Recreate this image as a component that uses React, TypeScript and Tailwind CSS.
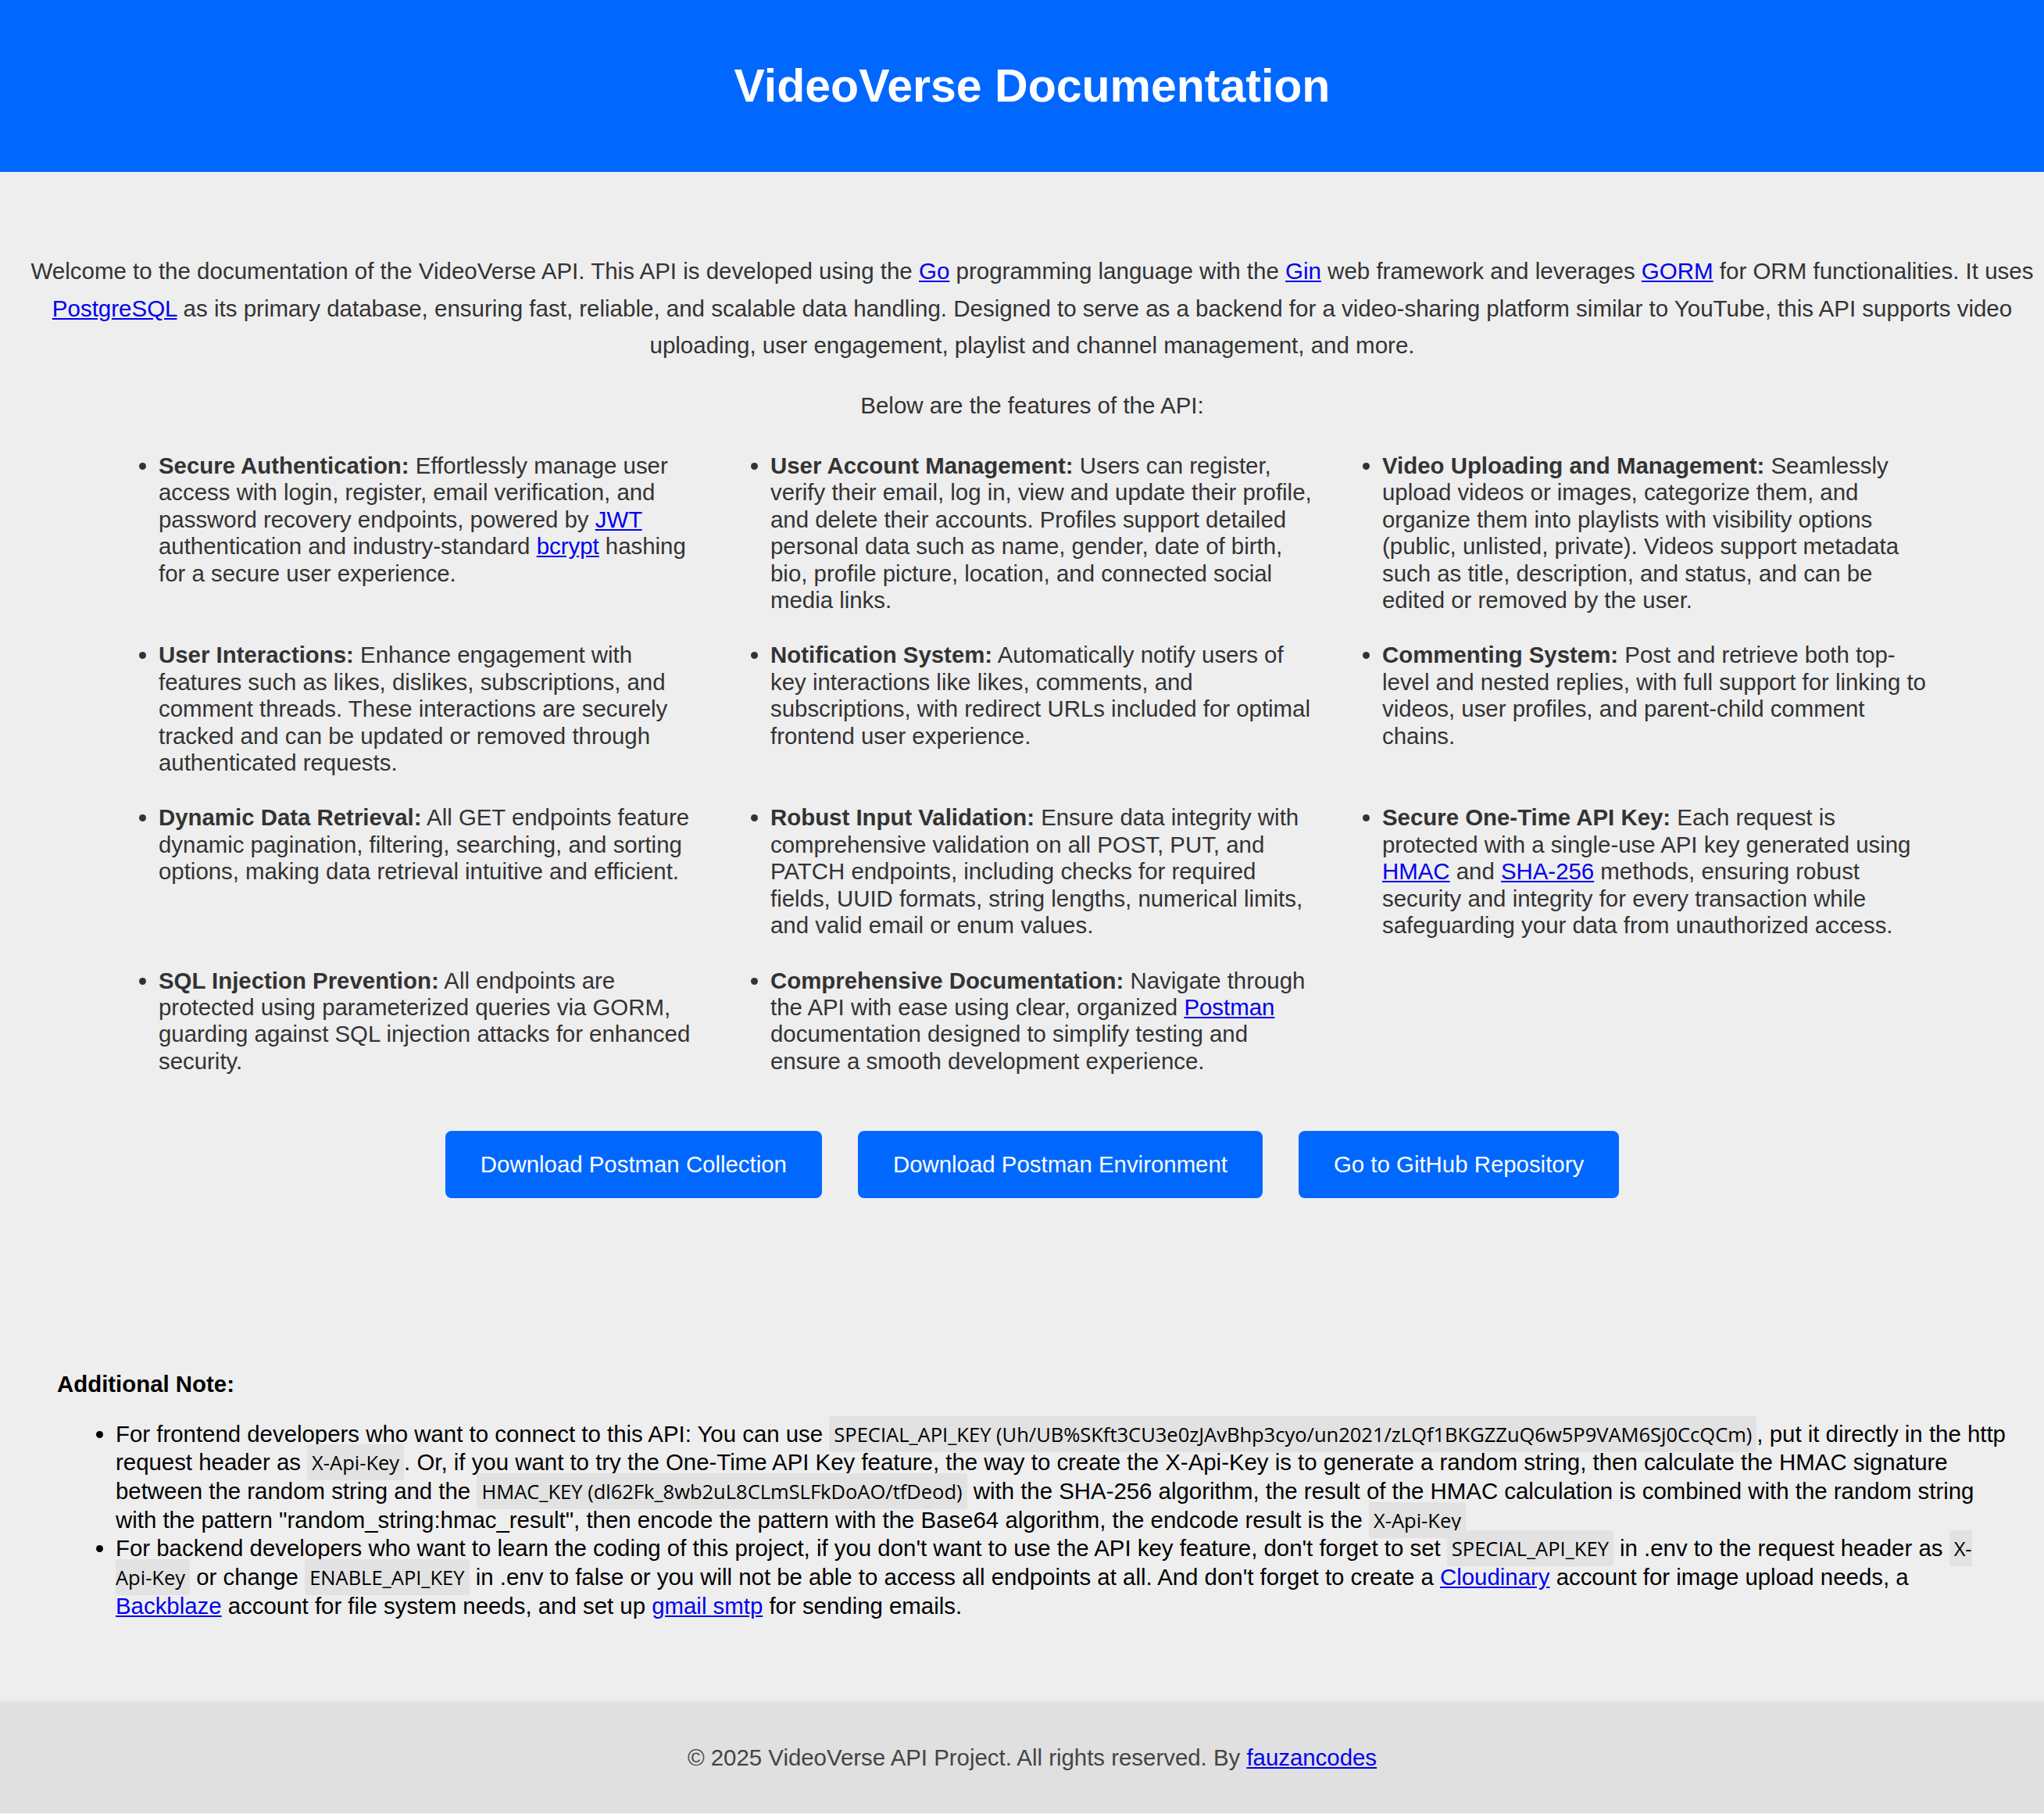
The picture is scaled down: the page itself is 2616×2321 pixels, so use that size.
import type { ReactNode } from 'react';

function A({ children }: { children: ReactNode }) {
  return (
    <a href="#" className="text-[#0000ee] underline">
      {children}
    </a>
  );
}

function Code({ children }: { children: ReactNode }) {
  return (
    <code className="rounded-[4px] bg-[#e2e2e2] px-[6px] py-[6px] font-['Open_Sans',sans-serif] text-[25.5px] leading-none">
      {children}
    </code>
  );
}

function Feature({ title, children }: { title: string; children: ReactNode }) {
  return (
    <li>
      <strong className="font-bold">{title}</strong> {children}
    </li>
  );
}

export default function App() {
  return (
    <div className="w-full overflow-hidden bg-[#eeeeee] font-['Liberation_Sans',Arial,sans-serif] text-[#333333]">
      <div className="w-[2642px]">
        <header className="flex h-[220px] items-center justify-center bg-[#0068ff]">
          <h1 className="text-[59px] font-bold leading-none text-white">VideoVerse Documentation</h1>
        </header>

        <section className="px-[33px] pt-[103px] text-center text-[29.5px] leading-[47.5px]">
          <p>
            Welcome to the documentation of the VideoVerse API. This API is developed using the <A>Go</A> programming
            language with the <A>Gin</A> web framework and leverages <A>GORM</A> for ORM functionalities. It uses{' '}
            <A>PostgreSQL</A> as its primary database, ensuring fast, reliable, and scalable data handling. Designed to
            serve as a backend for a video-sharing platform similar to YouTube, this API supports video uploading, user
            engagement, playlist and channel management, and more.
          </p>
          <p className="mt-[29px]">Below are the features of the API:</p>
        </section>

        <ul className="mt-[37px] ml-[203px] grid list-disc grid-cols-[701px_701px_701px] gap-x-[82px] gap-y-[36px] text-[29.4px] leading-[34.4px]">
          <Feature title="Secure Authentication:">
            Effortlessly manage user access with login, register, email verification, and password recovery endpoints,
            powered by <A>JWT</A> authentication and industry-standard <A>bcrypt</A> hashing for a secure user
            experience.
          </Feature>
          <Feature title="User Account Management:">
            Users can register, verify their email, log in, view and update their profile, and delete their accounts.
            Profiles support detailed personal data such as name, gender, date of birth, bio, profile picture, location,
            and connected social media links.
          </Feature>
          <Feature title="Video Uploading and Management:">
            Seamlessly upload videos or images, categorize them, and organize them into playlists with visibility
            options (public, unlisted, private). Videos support metadata such as title, description, and status, and can
            be edited or removed by the user.
          </Feature>
          <Feature title="User Interactions:">
            Enhance engagement with features such as likes, dislikes, subscriptions, and comment threads. These
            interactions are securely tracked and can be updated or removed through authenticated requests.
          </Feature>
          <Feature title="Notification System:">
            Automatically notify users of key interactions like likes, comments, and subscriptions, with redirect URLs
            included for optimal frontend user experience.
          </Feature>
          <Feature title="Commenting System:">
            Post and retrieve both top-level and nested replies, with full support for linking to videos, user profiles,
            and parent-child comment chains.
          </Feature>
          <Feature title="Dynamic Data Retrieval:">
            All GET endpoints feature dynamic pagination, filtering, searching, and sorting options, making data
            retrieval intuitive and efficient.
          </Feature>
          <Feature title="Robust Input Validation:">
            Ensure data integrity with comprehensive validation on all POST, PUT, and PATCH endpoints, including checks
            for required fields, UUID formats, string lengths, numerical limits, and valid email or enum values.
          </Feature>
          <Feature title="Secure One-Time API Key:">
            Each request is protected with a single-use API key generated using <A>HMAC</A> and <A>SHA-256</A> methods,
            ensuring robust security and integrity for every transaction while safeguarding your data from unauthorized
            access.
          </Feature>
          <Feature title="SQL Injection Prevention:">
            All endpoints are protected using parameterized queries via GORM, guarding against SQL injection attacks for
            enhanced security.
          </Feature>
          <Feature title="Comprehensive Documentation:">
            Navigate through the API with ease using clear, organized <A>Postman</A> documentation designed to simplify
            testing and ensure a smooth development experience.
          </Feature>
        </ul>

        <div className="mt-[72px] flex justify-center gap-[46px]">
          {['Download Postman Collection', 'Download Postman Environment', 'Go to GitHub Repository'].map((label) => (
            <a
              key={label}
              href="#"
              className="flex h-[86px] items-center rounded-[8px] bg-[#0068ff] px-[45px] text-[29.4px] text-white"
            >
              {label}
            </a>
          ))}
        </div>

        <section className="mt-[221px] px-[73px] text-black">
          <h3 className="text-[29.4px] font-bold leading-[34.4px]">Additional Note:</h3>
          <ul className="mt-[28px] list-disc pl-[75px] text-[29.4px] leading-[36.67px]">
            <li>
              For frontend developers who want to connect to this API: You can use{' '}
              <Code>SPECIAL_API_KEY (Uh/UB%SKft3CU3e0zJAvBhp3cyo/un2021/zLQf1BKGZZuQ6w5P9VAM6Sj0CcQCm)</Code>, put it
              directly in the http request header as <Code>X-Api-Key</Code>. Or, if you want to try the One-Time API Key
              feature, the way to create the X-Api-Key is to generate a random string, then calculate the HMAC signature
              between the random string and the <Code>HMAC_KEY (dl62Fk_8wb2uL8CLmSLFkDoAO/tfDeod)</Code> with the
              SHA-256 algorithm, the result of the HMAC calculation is combined with the random string with the pattern
              "random_string:hmac_result", then encode the pattern with the Base64 algorithm, the endcode result is the{' '}
              <Code>X-Api-Key</Code>
            </li>
            <li>
              For backend developers who want to learn the coding of this project, if you don't want to use the API key
              feature, don't forget to set <Code>SPECIAL_API_KEY</Code> in .env to the request header as{' '}
              <Code>X-Api-Key</Code> or change <Code>ENABLE_API_KEY</Code> in .env to false or you will not be able to
              access all endpoints at all. And don't forget to create a <A>Cloudinary</A> account for image upload
              needs, a <A>Backblaze</A> account for file system needs, and set up <A>gmail smtp</A> for sending emails.
            </li>
          </ul>
        </section>

        <footer className="mt-[105px] flex h-[142px] items-center justify-center bg-[#e0e0e0] text-[29.4px] text-[#444444] shadow-[0_-2px_4px_rgba(0,0,0,0.04)]">
          <p>
            © 2025 VideoVerse API Project. All rights reserved. By <A>fauzancodes</A>
          </p>
        </footer>
      </div>
    </div>
  );
}
